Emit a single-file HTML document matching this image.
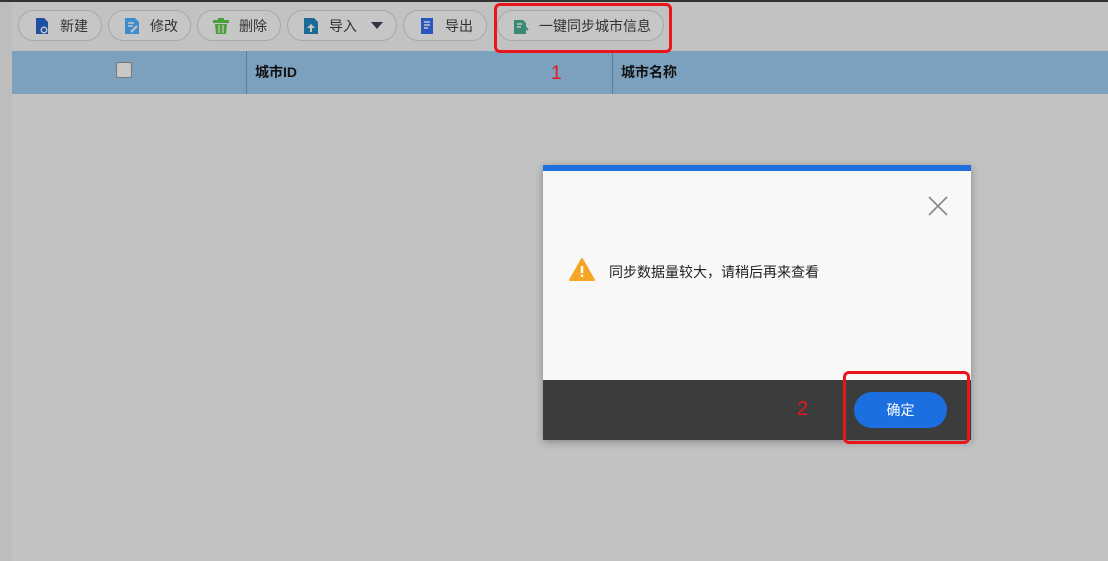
<!DOCTYPE html>
<html><head><meta charset="utf-8"><style>
*{margin:0;padding:0;box-sizing:border-box}
body{width:1108px;height:561px;background:#c2c2c2;position:relative;overflow:hidden;font-family:"Liberation Sans","Noto Sans CJK SC",sans-serif}
.abs{position:absolute}
.btn{position:absolute;top:10px;height:31px;border:1px solid #a8a8a8;border-radius:16px;background:#c6c6c6;font-size:14px;color:#333;display:flex;align-items:center;padding-left:14px}
.btn svg{margin-right:9px}
.red{position:absolute;border:3px solid #e8151b;border-radius:6px}
</style></head><body>
<div class="abs" style="left:0;top:0;width:1108px;height:2px;background:#333"></div>
<div class="abs" style="left:0;top:2px;width:12px;height:559px;background:#bdbdbd"></div>

<div class="btn" style="left:18px;width:84px"><svg width="18" height="18" viewBox="0 0 18 18"><path d="M3 1h8l4 4v12H3z" fill="#1f4fa0"/><circle cx="11" cy="13" r="3.5" fill="#c6c6c6"/><circle cx="11" cy="13" r="2" fill="#1f4fa0"/></svg>新建</div>
<div class="btn" style="left:108px;width:83px"><svg width="18" height="18" viewBox="0 0 18 18"><path d="M2 1h10l4 4v12H2z" fill="#3d8ccc"/><path d="M5 6h6M5 9h5" stroke="#c6c6c6" stroke-width="1.5"/><path d="M8 15l6-6" stroke="#c6c6c6" stroke-width="2"/></svg>修改</div>
<div class="btn" style="left:197px;width:84px"><svg width="18" height="18" viewBox="0 0 18 18"><rect x="1" y="3" width="16" height="3" fill="#49a03a"/><rect x="6" y="1" width="6" height="2" fill="#49a03a"/><path d="M3 7h12l-1 10H4z" fill="#49a03a"/><path d="M7 8v8M11 8v8" stroke="#c6c6c6" stroke-width="1.3"/></svg>删除</div>
<div class="btn" style="left:287px;width:110px"><svg width="18" height="18" viewBox="0 0 18 18"><path d="M2 1h10l4 4v12H2z" fill="#1e6a96"/><path d="M9 7l-4 4h3v4h2v-4h3z" fill="#c6c6c6"/></svg>导入<span style="margin-left:14px;width:0;height:0;border-left:6px solid transparent;border-right:6px solid transparent;border-top:7px solid #334"></span></div>
<div class="btn" style="left:403px;width:84px"><svg width="18" height="18" viewBox="0 0 18 18"><path d="M3 1h12v16H3z" fill="#2a56c0"/><path d="M6 5h6M6 8h6M6 11h4" stroke="#c6c6c6" stroke-width="1.5"/></svg>导出</div>
<div class="btn" style="left:497px;width:167px"><svg width="18" height="18" viewBox="0 0 18 18"><path d="M2 3h9l3 3v11H2z" fill="#3b8a76"/><path d="M5 7h5M5 10h4" stroke="#c6c6c6" stroke-width="1.4"/><path d="M13 17V10l-3 3M13 10l3 3" stroke="#3b8a76" stroke-width="2" fill="none"/></svg>一键同步城市信息</div>

<div class="abs" style="left:12px;top:51px;width:1096px;height:43px;background:#7ba1be"></div>
<div class="abs" style="left:246px;top:51px;width:1px;height:43px;background:#5e7c94"></div>
<div class="abs" style="left:612px;top:51px;width:1px;height:43px;background:#5e7c94"></div>
<div class="abs" style="left:116px;top:62px;width:16px;height:16px;border:1px solid #777;background:#c8c8c8;border-radius:2px"></div>
<div class="abs" style="left:255px;top:62px;font-size:14px;font-weight:bold;color:#111">城市ID</div>
<div class="abs" style="left:621px;top:62px;font-size:14px;font-weight:bold;color:#111">城市名称</div>
<div class="abs" style="left:551px;top:63px;font-size:19px;color:#e8151b">1</div>

<div class="abs" style="left:543px;top:165px;width:428px;height:275px;background:#f8f8f8;box-shadow:0 2px 8px rgba(0,0,0,.3)">
  <div class="abs" style="left:0;top:0;width:428px;height:6px;background:#1f6fe0"></div>
  <svg class="abs" style="left:384px;top:30px" width="22" height="22" viewBox="0 0 22 22"><path d="M2 2l18 18M20 2L2 20" stroke="#888" stroke-width="1.6"/></svg>
  <svg class="abs" style="left:26px;top:93px" width="26" height="23" viewBox="0 0 26 23"><path d="M13 1L25 22H1z" fill="#f5a623" stroke="#f5a623" stroke-linejoin="round" stroke-width="2"/><rect x="11.8" y="8" width="2.4" height="7" fill="#fff"/><rect x="11.8" y="16.5" width="2.4" height="2.4" fill="#fff"/></svg>
  <div class="abs" style="left:66px;top:97px;font-size:14px;color:#222">同步数据量较大，请稍后再来查看</div>
  <div class="abs" style="left:0;top:215px;width:428px;height:60px;background:#3c3c3c"></div>
  <div class="abs" style="left:254px;top:233px;font-size:20px;color:#e8151b">2</div>
  <div class="abs" style="left:311px;top:227px;width:93px;height:36px;border-radius:18px;background:#1b6fe0;color:#fff;font-size:14px;display:flex;align-items:center;justify-content:center">确定</div>
</div>

<div class="red" style="left:494px;top:3px;width:178px;height:50px"></div>
<div class="red" style="left:843px;top:371px;width:127px;height:73px"></div>
</body></html>
